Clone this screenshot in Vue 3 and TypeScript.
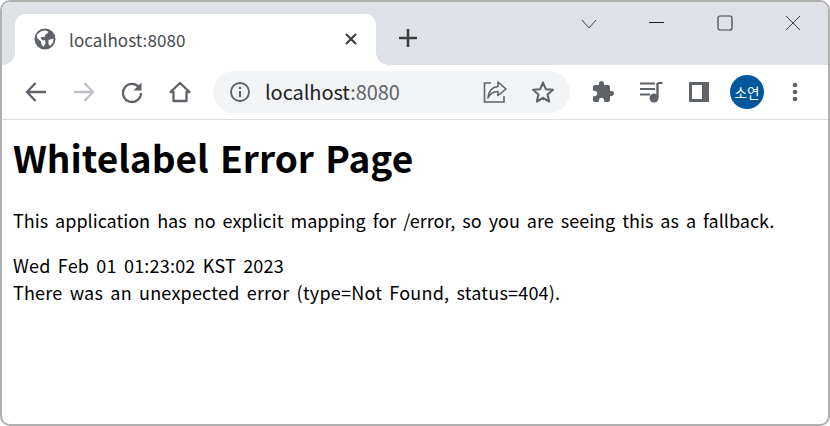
<script setup lang="ts">
const pageLines = ['Wed Feb 01 01:23:02 KST 2023', 'There was an unexpected error (type=Not Found, status=404).']
</script>

<template>
  <div class="window">
    <div class="tabstrip">
      <div class="tab">
        <svg class="tab__globe" width="22" height="22" viewBox="0 0 22 22">
          <circle cx="11" cy="11" r="10.5" fill="#5f6368" />
          <path d="M2.8 7 Q6 3 10.5 2.6 L13.5 3 L14 5 L11.5 6.2 L10.5 9 L6.5 9.3 L8 12.3 L11 12.3 L11.5 15.5 L9.5 19 L7.5 16.5 L7 13.5 L3 10 Z" fill="#fff" />
          <path d="M14.5 12 L19.5 10.5 L19 14.5 L16 18 L14.5 16 Z" fill="#fff" />
        </svg>
        <span class="tab__title">localhost:8080</span>
        <svg class="tab__close" width="14" height="14" viewBox="0 0 14 14">
          <path d="M2 2 L12 12 M12 2 L2 12" stroke="#3c4043" stroke-width="2.2" fill="none" />
        </svg>
      </div>
      <svg class="newtab" width="20" height="20" viewBox="0 0 20 20">
        <path d="M10 1 V19 M1 10 H19" stroke="#3c4043" stroke-width="2.6" fill="none" />
      </svg>
      <div class="controls">
        <svg width="16" height="12" viewBox="0 0 16 12"><path d="M1 3 L8 11 L15 3" stroke="#3c4043" stroke-width="1" fill="none" /></svg>
        <svg width="16" height="16" viewBox="0 0 16 16"><path d="M0 7.5 H15" stroke="#202124" stroke-width="1" fill="none" /></svg>
        <svg width="16" height="16" viewBox="0 0 16 16"><rect x="1" y="1" width="14" height="14" rx="2" stroke="#3c4043" stroke-width="1.2" fill="none" /></svg>
        <svg width="16" height="16" viewBox="0 0 16 16"><path d="M1 1 L15 15 M15 1 L1 15" stroke="#3c4043" stroke-width="1" fill="none" /></svg>
      </div>
    </div>

    <div class="toolbar">
      <div class="nav">
        <svg width="24" height="24" viewBox="0 0 24 24"><path d="M22 12 H3 M11.5 3 L3 12 L11.5 21" stroke="#5f6368" stroke-width="2.3" fill="none" /></svg>
        <svg width="24" height="24" viewBox="0 0 24 24"><path d="M2 12 H21 M12.5 3 L21 12 L12.5 21" stroke="#bdc1c6" stroke-width="2.3" fill="none" /></svg>
        <svg width="24" height="24" viewBox="0 0 24 24"><path d="M19.5 8 A9 9 0 1 0 21 13" stroke="#5f6368" stroke-width="2.3" fill="none" /><path d="M21.5 2.5 V10.5 H13.5 Z" fill="#5f6368" /></svg>
        <svg width="24" height="24" viewBox="0 0 24 24"><path d="M2.5 12 L12 3 L21.5 12 H18.5 V21 H5.5 V12 Z" stroke="#5f6368" stroke-width="2.3" stroke-linejoin="round" fill="none" /></svg>
      </div>
      <div class="omnibox">
        <svg width="20" height="20" viewBox="0 0 20 20">
          <circle cx="10" cy="10" r="9" stroke="#5f6368" stroke-width="1.9" fill="none" />
          <path d="M10 9 V15" stroke="#5f6368" stroke-width="2" fill="none" />
          <circle cx="10" cy="6" r="1.2" fill="#5f6368" />
        </svg>
        <span class="omnibox__url">localhost<span class="omnibox__port">:8080</span></span>
        <svg class="omnibox__share" width="24" height="24" viewBox="0 0 24 24">
          <path d="M8 3 H1.5 V22 H21 V16" stroke="#5f6368" stroke-width="1.6" fill="none" />
          <path d="M15 2 L23 9 L15 15.5 V11.5 C10 11.5 7 13.5 5 18 C5.5 11.5 9 7 15 6.5 Z" stroke="#5f6368" stroke-width="1.6" stroke-linejoin="round" fill="none" />
        </svg>
        <svg width="24" height="24" viewBox="0 0 24 24">
          <path d="M12 2.5 L14.8 9.2 L22 9.8 L16.5 14.5 L18.2 21.6 L12 17.8 L5.8 21.6 L7.5 14.5 L2 9.8 L9.2 9.2 Z" stroke="#5f6368" stroke-width="2" stroke-linejoin="round" fill="none" />
        </svg>
      </div>
      <div class="actions">
        <svg width="24" height="24" viewBox="0 0 24 24">
          <path d="M20.5 11H19V7c0-1.1-.9-2-2-2h-4V3.5C13 2.12 11.88 1 10.5 1S8 2.12 8 3.5V5H4c-1.1 0-1.99.9-1.99 2v3.8H3.5c1.49 0 2.7 1.21 2.7 2.7s-1.21 2.7-2.7 2.7H2V20c0 1.1.9 2 2 2h3.8v-1.5c0-1.49 1.21-2.7 2.7-2.7 1.49 0 2.7 1.21 2.7 2.7V22H17c1.1 0 2-.9 2-2v-4h1.5c1.38 0 2.5-1.12 2.5-2.5S21.88 11 20.5 11z" fill="#5f6368" />
        </svg>
        <svg width="24" height="24" viewBox="0 0 24 24">
          <path d="M1 3.5 H16 M1 9 H16 M1 14.5 H11" stroke="#5f6368" stroke-width="2" fill="none" />
          <path d="M18.5 3 V17.5" stroke="#5f6368" stroke-width="2.4" fill="none" />
          <path d="M18.5 3 H23.5" stroke="#5f6368" stroke-width="2" fill="none" />
          <circle cx="15" cy="18" r="4.5" fill="#5f6368" />
        </svg>
        <svg width="24" height="24" viewBox="0 0 24 24">
          <rect x="2" y="2" width="20" height="20" fill="#5f6368" />
          <rect x="5" y="5" width="10" height="14" fill="#fff" />
        </svg>
        <div class="avatar">소연</div>
        <svg width="24" height="24" viewBox="0 0 24 24">
          <circle cx="12" cy="5" r="2.3" fill="#5f6368" />
          <circle cx="12" cy="12" r="2.3" fill="#5f6368" />
          <circle cx="12" cy="19" r="2.3" fill="#5f6368" />
        </svg>
      </div>
    </div>

    <div class="page">
      <h1>Whitelabel Error Page</h1>
      <p>This application has no explicit mapping for /error, so you are seeing this as a fallback.</p>
      <div class="details">
        <div v-for="line in pageLines" :key="line">{{ line }}</div>
      </div>
    </div>
  </div>
</template>

<style>
html, body { margin: 0; background: #fff; }
</style>

<style scoped>
.window {
  box-sizing: border-box;
  width: 830px;
  height: 426px;
  display: flex;
  flex-direction: column;
  overflow: hidden;
  background: #fff;
  border: 2px solid #b0b0b0;
  border-radius: 10px;
  font-family: "Noto Sans CJK KR", "Noto Sans", sans-serif;
}

.tabstrip {
  height: 63px;
  flex: none;
  display: flex;
  align-items: flex-end;
  background: #dee1e6;
  padding-left: 13px;
}

.tab {
  position: relative;
  width: 361px;
  height: 51px;
  box-sizing: border-box;
  display: flex;
  align-items: center;
  padding: 0 18px 1px 19px;
  background: #fff;
  border-radius: 11px 11px 0 0;
}

.tab::before,
.tab::after {
  content: '';
  position: absolute;
  bottom: 0;
  width: 12px;
  height: 12px;
}

.tab::before {
  left: -12px;
  background: radial-gradient(circle at 0 0, #dee1e6 11.5px, #fff 12px);
}

.tab::after {
  right: -12px;
  background: radial-gradient(circle at 100% 0, #dee1e6 11.5px, #fff 12px);
}

.tab__title {
  margin-left: 13px;
  font-size: 17px;
  letter-spacing: 0.08px;
  color: #45494e;
}

.tab__close {
  margin-left: auto;
}

.newtab {
  margin: 0 0 17px 22px;
}

.controls {
  margin-left: auto;
  align-self: flex-start;
  display: flex;
  align-items: center;
  gap: 52px;
  padding: 13px 27px 0 0;
}

.toolbar {
  height: 55px;
  flex: none;
  box-sizing: border-box;
  display: flex;
  align-items: center;
  padding-left: 22px;
  border-bottom: 1px solid #dadce0;
}

.nav {
  display: flex;
  gap: 24px;
}

.omnibox {
  width: 357px;
  height: 42px;
  margin-left: 21px;
  box-sizing: border-box;
  display: flex;
  align-items: center;
  padding: 0 15px 0 17px;
  border-radius: 21px;
  background: #f1f3f4;
}

.omnibox__url {
  margin: 0 0 2px 15px;
  font-size: 20px;
  letter-spacing: -0.07px;
  color: #202124;
}

.omnibox__port {
  color: #5f6368;
}

.omnibox__share {
  margin-left: auto;
  margin-right: 24px;
}

.actions {
  display: flex;
  align-items: center;
  gap: 24px;
  margin-left: 21px;
}

.avatar {
  width: 34px;
  height: 34px;
  margin: 0 -5px;
  border-radius: 50%;
  background: #01579b;
  color: #fff;
  font-size: 13.5px;
  line-height: 34px;
  text-align: center;
}

.page {
  padding: 0 11px;
  color: #000;
  font-size: 18px;
  line-height: 27px;
  word-spacing: 3px;
}

h1 {
  margin: 13px 0 0;
  font-size: 37px;
  font-weight: 700;
  line-height: 48px;
}

p {
  margin: 26px 0 0;
}

.details {
  margin-top: 18px;
  letter-spacing: 0.2px;
}
</style>
